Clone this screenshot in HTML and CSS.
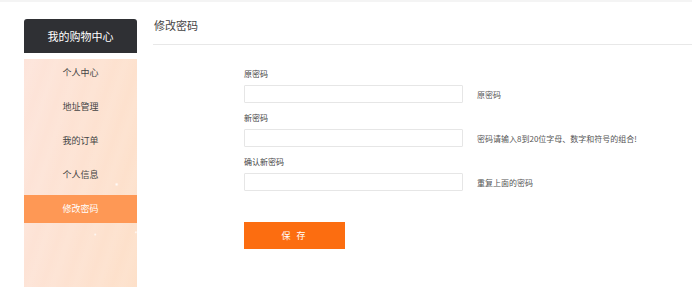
FILE: index.html
```html
<!DOCTYPE html>
<html lang="zh-CN">
<head>
    <meta charset="UTF-8">
    <title>修改密码</title>
    <link rel="stylesheet" href="styles.css">
</head>
<body>
<div class="topbar"></div>
<div class="page">
    <div class="sidebar">
        <div class="side-head">我的购物中心</div>
        <ul class="side-menu">
            <li><a href="#">个人中心</a></li>
            <li><a href="#">地址管理</a></li>
            <li><a href="#">我的订单</a></li>
            <li><a href="#">个人信息</a></li>
            <li class="active"><a href="#">修改密码</a></li>
        </ul>
    </div>

    <div class="main">
        <h3 class="main-title">修改密码</h3>
        <form class="pwd-form">
            <div class="field">
                <label>原密码</label>
                <div class="row">
                    <input type="password">
                    <span class="hint">原密码</span>
                </div>
            </div>
            <div class="field">
                <label>新密码</label>
                <div class="row">
                    <input type="password">
                    <span class="hint">密码请输入8到20位字母、数字和符号的组合!</span>
                </div>
            </div>
            <div class="field">
                <label>确认新密码</label>
                <div class="row">
                    <input type="password">
                    <span class="hint">重复上面的密码</span>
                </div>
            </div>
            <button type="button" class="save-btn">保 存</button>
        </form>
    </div>
</div>
</body>
</html>
```

FILE: styles.css
```css
body {
    margin: 0;
    font-family: "Noto Sans CJK SC", "Noto Sans", sans-serif;
    background: #fff;
    color: #333;
}
.topbar {
    height: 2px;
    background: #f4f4f4;
}
.page {
    display: flex;
    align-items: flex-start;
    padding: 17px 0 0 24px;
}
.sidebar {
    width: 113px;
    flex-shrink: 0;
}
.side-head {
    height: 34px;
    line-height: 34px;
    background: #2f3034;
    color: #fff;
    text-align: center;
    font-size: 11px;
    border-radius: 3px 3px 0 0;
}
.side-menu {
    list-style: none;
    margin: 0;
    padding: 0 0 64px;
    background:
        radial-gradient(circle at 82% 55%, rgba(255, 255, 255, 0.95) 0, rgba(255, 255, 255, 0) 2px),
        radial-gradient(circle at 63% 77%, rgba(255, 255, 255, 0.9) 0, rgba(255, 255, 255, 0) 1.5px),
        radial-gradient(circle at 99% 76%, rgba(255, 255, 255, 0.9) 0, rgba(255, 255, 255, 0) 1.5px),
        repeating-linear-gradient(108deg, rgba(255, 255, 255, 0) 0, rgba(255, 255, 255, 0.08) 9px, rgba(255, 255, 255, 0) 22px),
        linear-gradient(100deg, #fde4da, #fde0c9);
}
.side-menu li {
    margin-top: 6px;
    height: 28px;
    line-height: 28px;
    text-align: center;
    font-size: 9px;
}
.side-menu a {
    display: block;
    color: #444;
    text-decoration: none;
}
.side-menu li.active {
    background: #fe9855;
}
.side-menu li.active a {
    color: #fff;
}
.main {
    flex: 1;
    margin-left: 16px;
}
.main-title {
    margin: 0;
    padding: 0 0 13px 1px;
    font-size: 11px;
    line-height: 12px;
    font-weight: normal;
    color: #444;
    border-bottom: 1px solid #e8e8e8;
}
.pwd-form {
    padding: 24px 0 0 91px;
}
.field {
    margin-bottom: 10px;
}
.field label {
    display: block;
    font-size: 8px;
    line-height: 10px;
    color: #444;
    margin-bottom: 6px;
}
.row {
    display: flex;
    align-items: center;
}
.row input {
    box-sizing: border-box;
    width: 219px;
    height: 18px;
    margin: 0;
    border: 1px solid #e6e6e6;
    border-radius: 1px;
    outline: none;
}
.hint {
    margin-left: 14px;
    font-size: 8px;
    color: #555;
}
.save-btn {
    display: block;
    margin-top: 31px;
    width: 101px;
    height: 27px;
    border: none;
    background: #fc6d10;
    color: #fff;
    font-family: inherit;
    font-size: 9px;
    letter-spacing: 2px;
    cursor: pointer;
}
```
